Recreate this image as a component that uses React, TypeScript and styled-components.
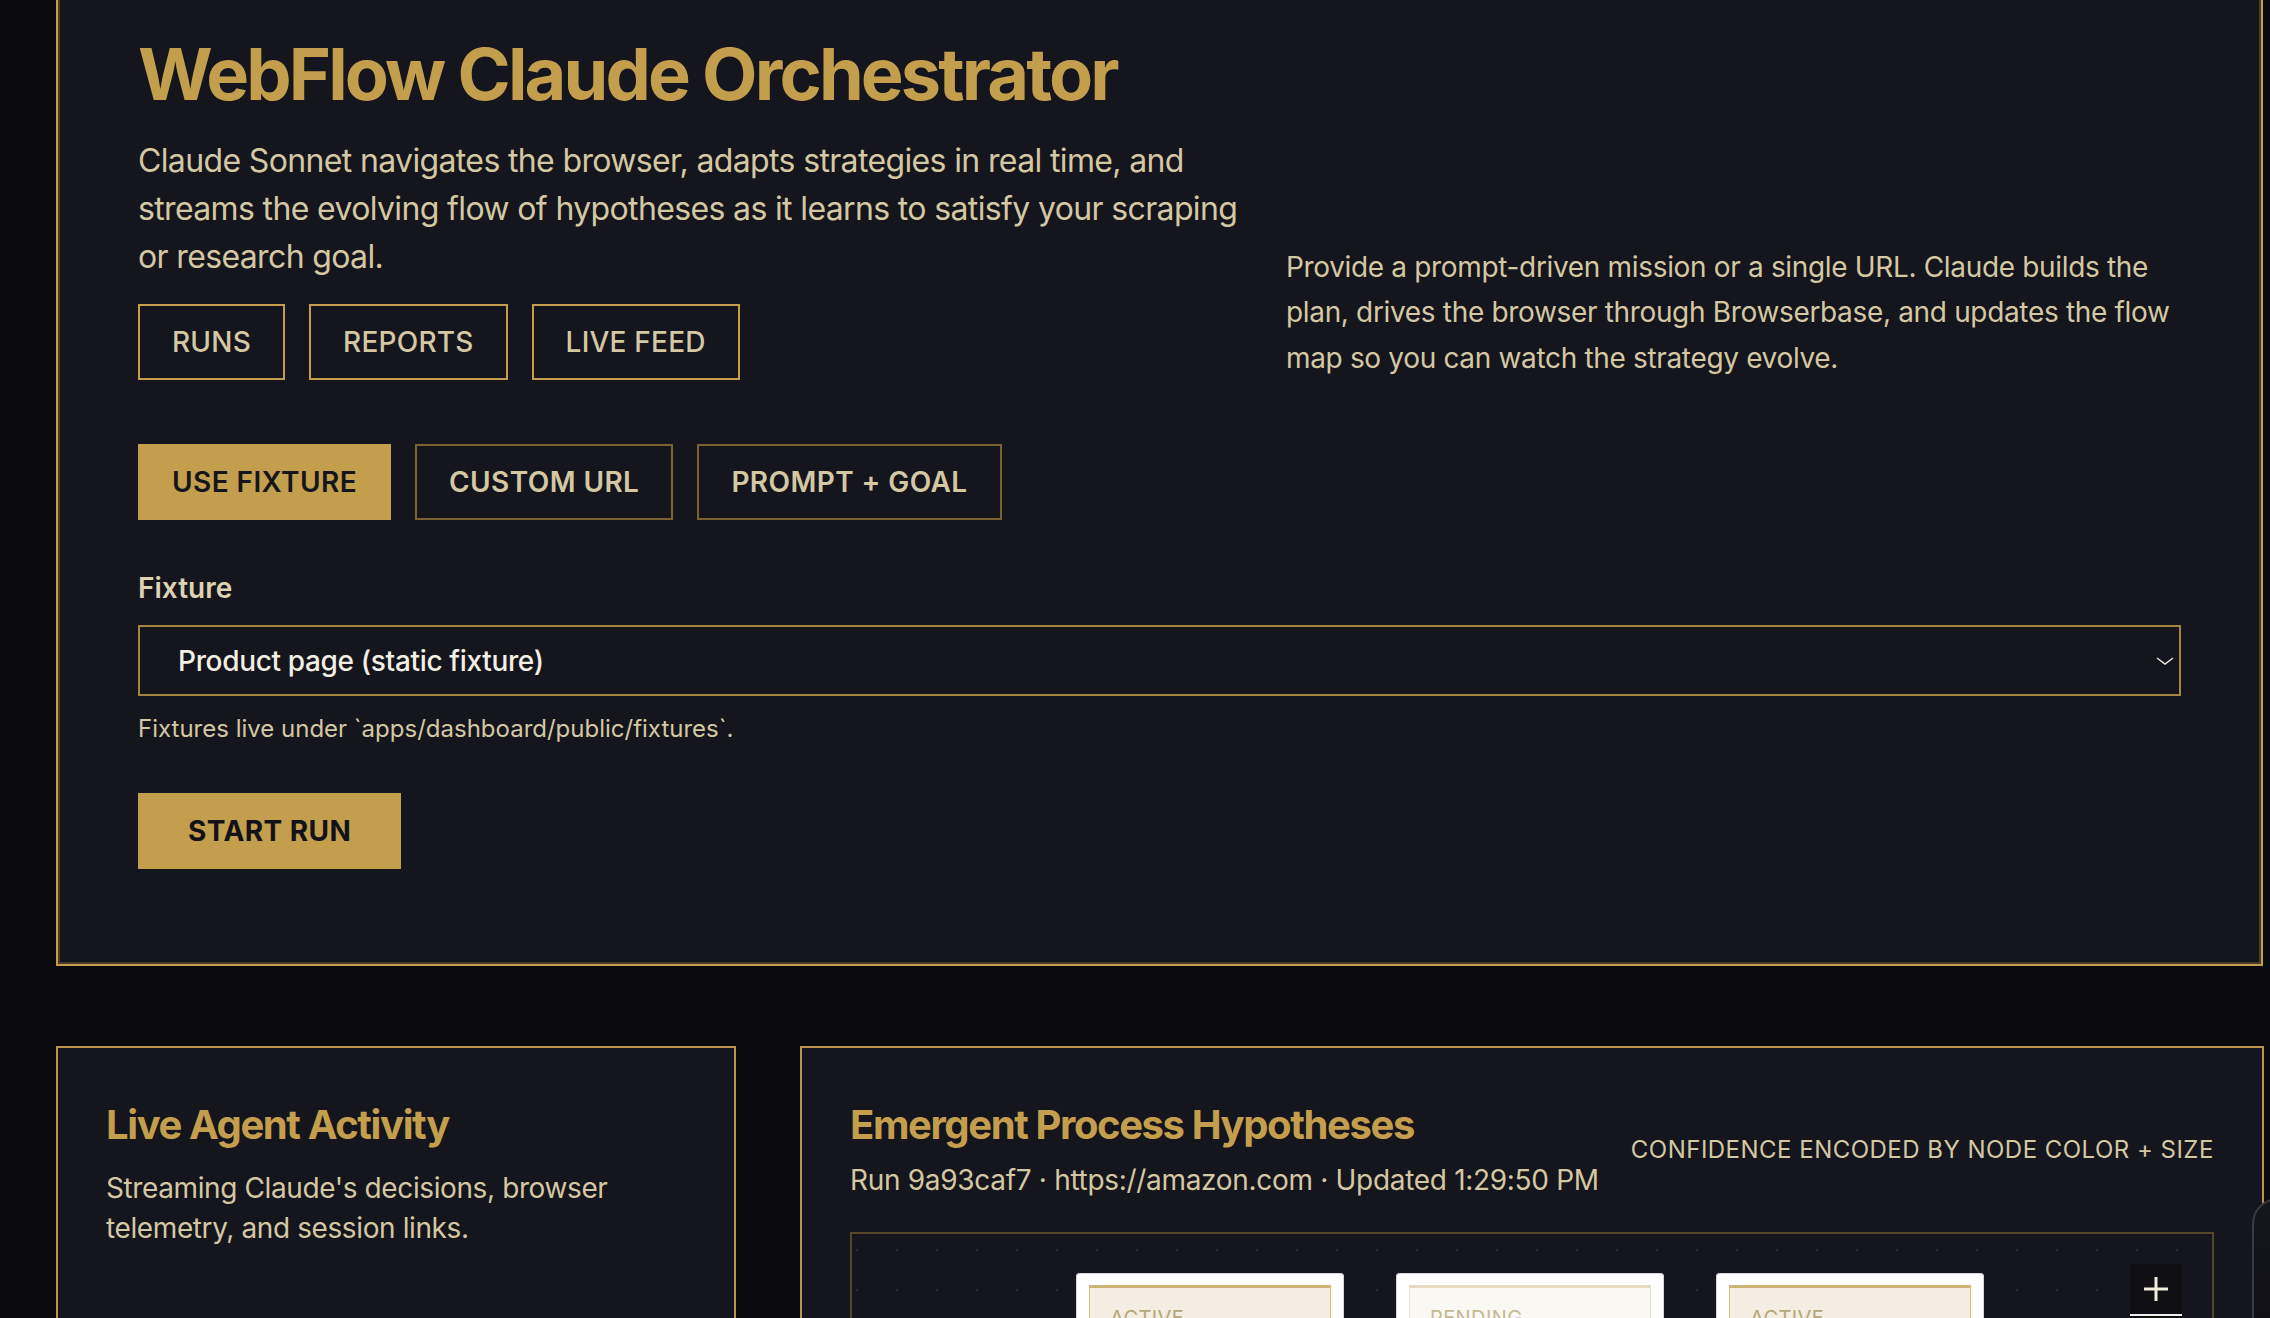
import styled, { createGlobalStyle } from 'styled-components';

const GOLD = '#c39e4d';
const BEIGE = '#d4c8a4';
const PANEL = '#14151d';

const GlobalStyle = createGlobalStyle`
  html, body {
    margin: 0;
    padding: 0;
    background: #0b0b0f;
    overflow: hidden;
  }
  body {
    font-family: Inter, "Noto Sans", "Liberation Sans", sans-serif;
    -webkit-font-smoothing: antialiased;
  }
  * {
    box-sizing: border-box;
  }
`;

// the screenshot is scrolled a little, so the hero's top edge sits above the viewport
const Page = styled.div`
  margin-top: -48px;
  padding: 0 7px 0 56px;
`;

const Hero = styled.section`
  border: 2px solid ${GOLD};
  box-shadow: inset 0 0 0 2px #463b26;
  background: ${PANEL};
  padding: 80px 80px 95px;
`;

const HeroGrid = styled.div`
  display: grid;
  grid-template-columns: 1124px 1fr;
  column-gap: 24px;
  align-items: end;
`;

const Title = styled.h1`
  margin: 0;
  font-size: 72px;
  line-height: 79px;
  font-weight: 700;
  letter-spacing: -0.04em;
  color: ${GOLD};
`;

const Lead = styled.p`
  margin: 24px 0 0;
  font-size: 32px;
  line-height: 48px;
  letter-spacing: -0.02em;
  color: ${BEIGE};
`;

const Description = styled.p`
  margin: 0 0 -1px;
  font-size: 28px;
  line-height: 45.5px;
  letter-spacing: -0.012em;
  color: ${BEIGE};
`;

const ButtonRow = styled.div<{ $top: number }>`
  display: flex;
  gap: 24px;
  margin-top: ${({ $top }) => $top}px;
`;

const NavButton = styled.button`
  height: 76px;
  padding: 0 32px;
  border: 2px solid ${GOLD};
  background: transparent;
  color: ${BEIGE};
  font-family: inherit;
  font-size: 28px;
  font-weight: 500;
  letter-spacing: 0.008em;
  text-transform: uppercase;
`;

const ModeTab = styled.button<{ $active?: boolean }>`
  height: 76px;
  padding: 0 32px;
  border: 2px solid ${({ $active }) => ($active ? GOLD : '#7a6332')};
  background: ${({ $active }) => ($active ? GOLD : 'transparent')};
  color: ${({ $active }) => ($active ? '#15151b' : BEIGE)};
  font-family: inherit;
  font-size: 28px;
  font-weight: 600;
  letter-spacing: 0.015em;
  text-transform: uppercase;
`;

const FieldLabel = styled.label`
  display: block;
  margin-top: 47px;
  font-size: 28px;
  line-height: 42px;
  font-weight: 600;
  color: #ddd2b2;
`;

const SelectBox = styled.div`
  position: relative;
  margin-top: 16px;
  height: 71px;
  border: 2px solid #a3853f;
  display: flex;
  align-items: center;
  padding: 0 40px 0 38px;
  font-size: 28px;
  font-weight: 500;
  letter-spacing: -0.012em;
  color: #f3efe4;
`;

const Chevron = styled.svg`
  position: absolute;
  right: 5px;
  top: 50%;
  margin-top: -4px;
`;

const Hint = styled.p`
  margin: 15px 0 0;
  font-size: 24px;
  line-height: 36px;
  color: ${BEIGE};
`;

const StartButton = styled.button`
  margin-top: 46px;
  height: 76px;
  padding: 0 48px;
  border: 2px solid ${GOLD};
  background: ${GOLD};
  color: #121218;
  font-family: inherit;
  font-size: 28px;
  font-weight: 700;
  letter-spacing: 0.015em;
  text-transform: uppercase;
`;

const Cards = styled.div`
  display: grid;
  grid-template-columns: 680px 1fr;
  gap: 64px;
  margin-top: 80px;
`;

const Card = styled.section`
  border: 2px solid #b8944a;
  background: ${PANEL};
  padding: 49px 48px 48px;
  min-height: 700px;
`;

const CardHeader = styled.div`
  display: flex;
  align-items: center;
  justify-content: space-between;
  gap: 32px;
`;

const CardTitle = styled.h2`
  margin: 0;
  font-size: 40px;
  line-height: 56px;
  font-weight: 700;
  letter-spacing: -0.035em;
  color: ${GOLD};
`;

const CardText = styled.p<{ $top: number }>`
  margin: ${({ $top }) => $top}px 0 0;
  font-size: 28px;
  line-height: 40px;
  letter-spacing: -0.014em;
  color: ${BEIGE};
`;

const Subtitle = styled.p`
  margin: 6px 0 0;
  font-size: 28px;
  line-height: 42px;
  letter-spacing: -0.011em;
  color: ${BEIGE};
  white-space: nowrap;
`;

const Legend = styled.span`
  font-size: 24px;
  letter-spacing: 0.02em;
  text-transform: uppercase;
  color: ${BEIGE};
  white-space: nowrap;
`;

const Canvas = styled.div`
  position: relative;
  margin-top: 31px;
  height: 640px;
  border: 2px solid #574629;
  overflow: hidden;
  background-color: ${PANEL};
  background-image: radial-gradient(circle, #2b2c34 1.4px, transparent 1.6px);
  background-size: 40px 40px;
  background-position: -15px -4px;
`;

const Node = styled.div<{ $x: number; $y: number }>`
  position: absolute;
  left: ${({ $x }) => $x}px;
  top: ${({ $y }) => $y}px;
  width: 268px;
  padding: 11px 12px 12px;
  background: #ffffff;
  border: 1px solid #d6d6dc;
  border-radius: 3px;
`;

const NodeBody = styled.div<{ $pending?: boolean }>`
  padding: 18px 20px 20px;
  background: ${({ $pending }) => ($pending ? '#faf8f3' : '#f4ede1')};
  border: 1px solid ${({ $pending }) => ($pending ? '#ebe1cc' : '#d6bd80')};
  border-top-width: 3px;
  border-top-color: ${({ $pending }) => ($pending ? '#e6dac2' : '#cdb273')};
`;

const NodeStatus = styled.div<{ $pending?: boolean }>`
  font-size: 20px;
  letter-spacing: 0.02em;
  text-transform: uppercase;
  color: ${({ $pending }) => ($pending ? '#c4b995' : '#b5a779')};
`;

const NodeName = styled.div`
  margin-top: 8px;
  font-size: 24px;
  font-weight: 600;
  color: #2a2720;
`;

const Controls = styled.div`
  position: absolute;
  top: 30px;
  right: 30px;
  display: flex;
  flex-direction: column;
`;

const ControlButton = styled.button`
  width: 52px;
  height: 52px;
  display: flex;
  align-items: center;
  justify-content: center;
  padding: 0;
  border: none;
  border-bottom: 2px solid #f2f0ea;
  background: #101014;
`;

const SideDrawer = styled.aside`
  position: fixed;
  left: 2252px;
  top: 1198px;
  width: 420px;
  height: 400px;
  border: 2px solid #3a3b42;
  border-radius: 26px 0 0 0;
  background: linear-gradient(160deg, #16171d, #0c0c10 40%);
`;

const nodes = [
  { status: 'Active', name: 'Open product page', x: 224, y: 39 },
  { status: 'Pending', name: 'Read price block', x: 544, y: 39 },
  { status: 'Active', name: 'Collect reviews', x: 864, y: 39 },
];

const App = () => (
  <>
    <GlobalStyle />
    <Page>
      <Hero>
        <HeroGrid>
          <div>
            <Title>WebFlow Claude Orchestrator</Title>
            <Lead>
              Claude Sonnet navigates the browser, adapts strategies in real time, and streams the evolving flow of
              hypotheses as it learns to satisfy your scraping or research goal.
            </Lead>
            <ButtonRow $top={23}>
              <NavButton>Runs</NavButton>
              <NavButton>Reports</NavButton>
              <NavButton>Live Feed</NavButton>
            </ButtonRow>
          </div>
          <Description>
            Provide a prompt-driven mission or a single URL. Claude builds the plan, drives the browser through
            Browserbase, and updates the flow map so you can watch the strategy evolve.
          </Description>
        </HeroGrid>

        <ButtonRow $top={64}>
          <ModeTab $active>Use Fixture</ModeTab>
          <ModeTab>Custom URL</ModeTab>
          <ModeTab>Prompt + Goal</ModeTab>
        </ButtonRow>

        <FieldLabel>Fixture</FieldLabel>
        <SelectBox>
          Product page (static fixture)
          <Chevron width="18" height="8" viewBox="0 0 18 8" fill="none">
            <path d="M1 1l8 6 8-6" stroke="#eeeae0" strokeWidth="1.4" />
          </Chevron>
        </SelectBox>
        <Hint>Fixtures live under `apps/dashboard/public/fixtures`.</Hint>
        <StartButton>Start Run</StartButton>
      </Hero>

      <Cards>
        <Card>
          <CardTitle>Live Agent Activity</CardTitle>
          <CardText $top={15}>Streaming Claude's decisions, browser telemetry, and session links.</CardText>
        </Card>

        <Card>
          <CardHeader>
            <div>
              <CardTitle>Emergent Process Hypotheses</CardTitle>
              <Subtitle>Run 9a93caf7 · https://amazon.com · Updated 1:29:50 PM</Subtitle>
            </div>
            <Legend>Confidence encoded by node color + size</Legend>
          </CardHeader>
          <Canvas>
            {nodes.map((node) => {
              const pending = node.status === 'Pending';
              return (
                <Node key={node.x} $x={node.x} $y={node.y}>
                  <NodeBody $pending={pending}>
                    <NodeStatus $pending={pending}>{node.status}</NodeStatus>
                    <NodeName>{node.name}</NodeName>
                  </NodeBody>
                </Node>
              );
            })}
            <Controls>
              <ControlButton aria-label="zoom in">
                <svg width="24" height="24" viewBox="0 0 24 24" fill="none">
                  <path d="M12 0v24M0 12h24" stroke="#f1ecdc" strokeWidth="3" />
                </svg>
              </ControlButton>
              <ControlButton aria-label="zoom out">
                <svg width="24" height="24" viewBox="0 0 24 24" fill="none">
                  <path d="M0 12h24" stroke="#f1ecdc" strokeWidth="3" />
                </svg>
              </ControlButton>
            </Controls>
          </Canvas>
        </Card>
      </Cards>
    </Page>
    <SideDrawer />
  </>
);

export default App;
